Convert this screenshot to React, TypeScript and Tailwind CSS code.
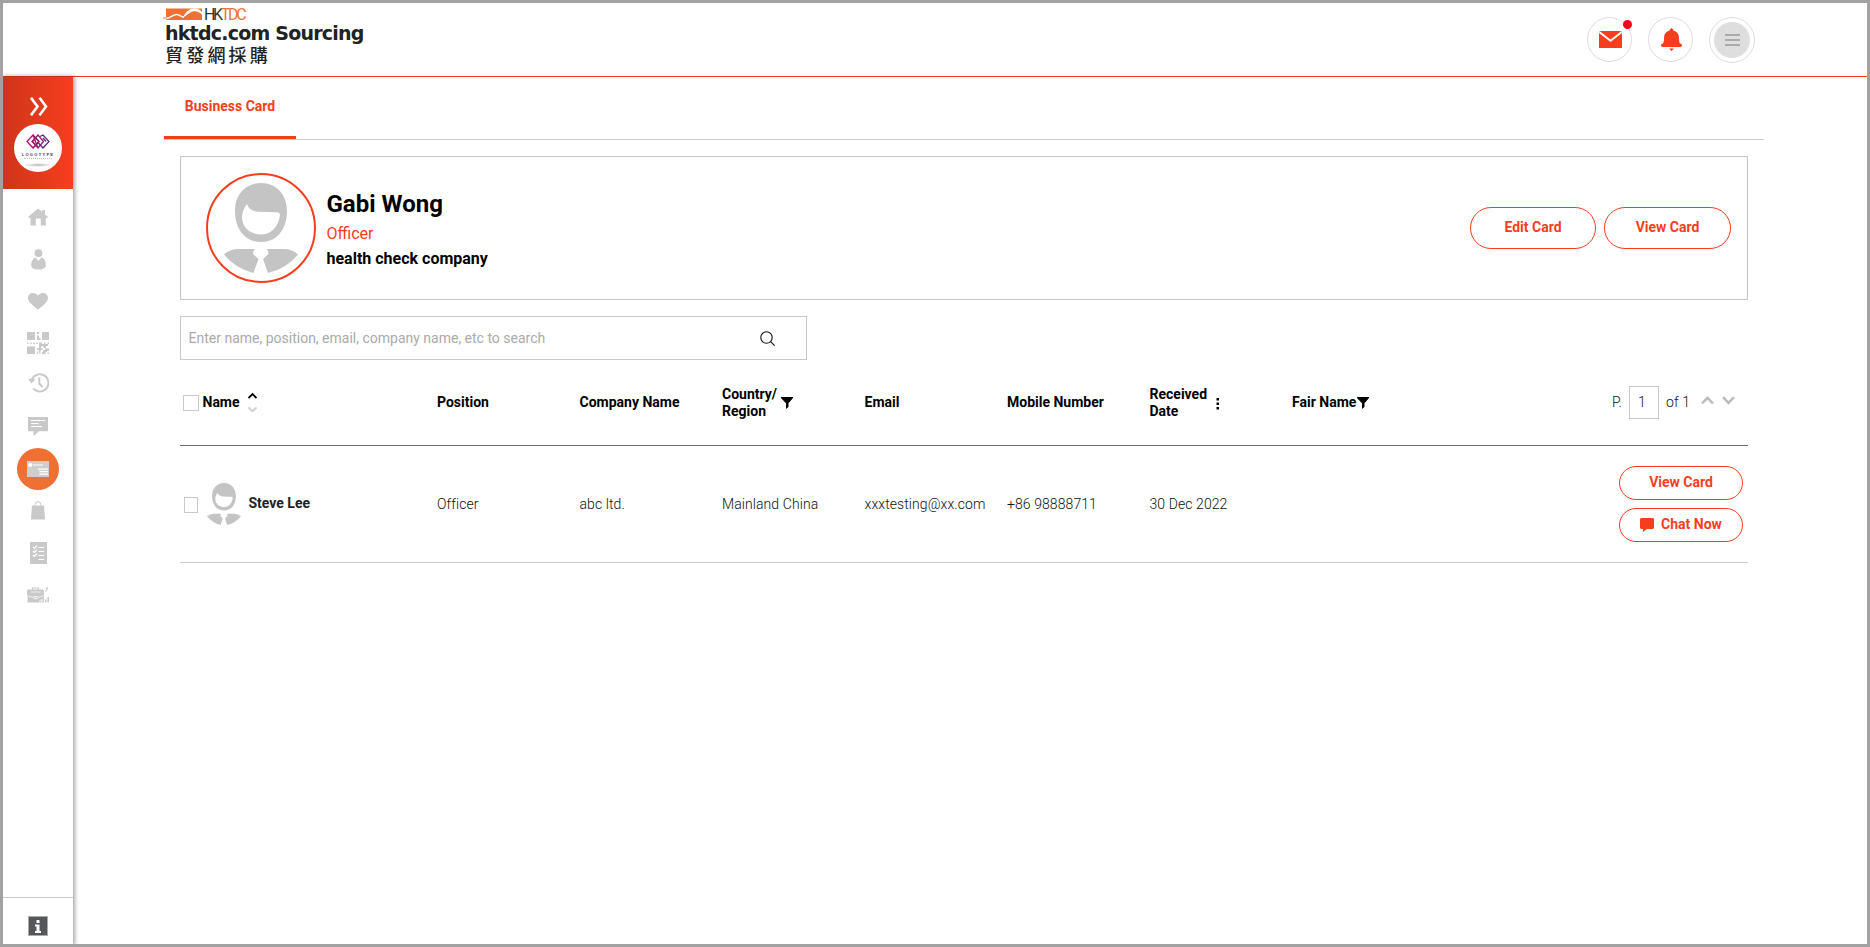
import React from "react";

const sideIcon = "fill-[#c9c9c9]";

function Home() {
  return (
    <svg className={sideIcon} width="20" height="18" viewBox="0 0 20 18">
      <path d="M10 0.5 14.2 4V2h2.8v4.4L20 9l-1 1.2-1.2-.9V17.5h-5V10.5H7.8v7H2.5V9.3L1.2 10.2 0 9z" />
    </svg>
  );
}
function Person() {
  return (
    <svg className={sideIcon} width="15" height="21" viewBox="0 0 15 21">
      <circle cx="7.500" cy="4.200" r="3.900" />
      <path d="M4.200 8.300 7.500 12l3.300-3.700C13.200 9.500 15 13 14.800 16.400 14.800 19 11 20.600 7.500 20.600S.3 19 .3 16.400C.1 13 1.800 9.500 4.200 8.300z" />
    </svg>
  );
}
function Heart() {
  return (
    <svg className={sideIcon} width="20" height="17" viewBox="0 0 20 17">
      <path d="M10 16.800C6.500 13.500 0 9.500 0 5 0 2 2.300 0 5 0c2.200 0 4.200 1.200 5 2.800C10.800 1.200 12.800 0 15 0c2.700 0 5 2 5 5 0 4.500-6.500 8.500-10 11.800z" />
    </svg>
  );
}
function Qr() {
  return (
    <svg className={sideIcon} width="22" height="22" viewBox="0 0 22 22">
      <path d="M0 0h8v8H0zM15 0h7v8h-7zM0 14.500h8V22H0zM10 0h2.200v2H10zM10 3.500h2V6h1.500v2H10zM0 10.500h1.500V12H0zM3.200 10.500h1.500V12H3.200zM6.200 10.500h1.600V12H6.200zM9.200 10.500h1.600V12H9.200zM12 10.500h3V12h2v-1.500h1.500V12H21v2h-2v2h-2.500v-1.800H14v2h1.500V18h-2v3.500H12V18h-1.800v-2H12zM20.500 10.500H22V12h-1.500zM16 18h2v-1.500h4V19h-2v1h-1.500v2H15v-2h1zM10 19.500h1.200V22H10zM20.500 20.500H22V22h-1.500z" />
    </svg>
  );
}
function History() {
  return (
    <svg width="21" height="20" viewBox="0 0 21 20" fill="none" stroke="#c9c9c9" strokeWidth="2">
      <path d="M3.300 9.200a8.600 8.600 0 1 1 2 6.200" />
      <path d="M11.300 4.500v6l3.200 3.500" />
      <path d="M0 5.800 3.600 10.500 7.300 6.300z" fill="#c9c9c9" stroke="none" />
    </svg>
  );
}
function Message() {
  return (
    <svg width="20" height="19" viewBox="0 0 20 19">
      <path fill="#c9c9c9" d="M0 0h20v14.200h-9L5.500 19v-4.800H0z" />
      <path stroke="#fff" strokeWidth="1.200" d="M3 3.500h14M3 6.500h7.500M3 9.500h11" />
    </svg>
  );
}
function CardIcon() {
  return (
    <svg width="22" height="16" viewBox="0 0 22 16">
      <path fill="#cecece" d="M0 0h22v16H0z" />
      <circle cx="3.200" cy="4" r="2.100" fill="#fff" />
      <path stroke="#fff" strokeWidth="1.200" d="M6 4h10M11 8.200h10M12.300 10.600H21M12.300 13.100H21" />
    </svg>
  );
}
function Bag() {
  return (
    <svg width="14" height="19" viewBox="0 0 14 19">
      <path fill="#c9c9c9" d="M1 4.500h12l1 14H0z" />
      <path fill="none" stroke="#c9c9c9" strokeWidth="1" d="M4.200 5V3.500a2.800 2.800 0 0 1 5.600 0V5" />
    </svg>
  );
}
function Checklist() {
  return (
    <svg width="17" height="22" viewBox="0 0 17 22">
      <path fill="#c9c9c9" d="M0 0h17v22H0z" />
      <path fill="none" stroke="#fff" strokeWidth="1.200" d="m3 5 1.300 1.300L7 3.800M3 9l1.300 1.300L7 7.800M3 13l1.300 1.300L7 11.800M8.500 5.500H14M8.500 9.500H14M8.500 13.500H14M8.500 17.500H14" />
    </svg>
  );
}
function Briefcase() {
  return (
    <svg width="22" height="16" viewBox="0 0 22 16">
      <path fill="none" stroke="#c9c9c9" strokeWidth="1.200" d="M5.500 3V1h6v2M18.500 4.500 20.800 1M18.800 1H21" />
      <path fill="#c9c9c9" d="M1.500 2.600h14q1.500 0 1.500 1.600V11l-4.500 2.500V15.400H.6V9.500L0 8.200V4.200q0-1.600 1.500-1.600zM13.200 13.500h1.400v2h-1.400zM15.500 11.500H17v4h-1.500zM18 12.500h1.500v3H18zM20.500 10H22v5.500h-1.500z" />
      <path fill="none" stroke="#fff" strokeWidth=".7" d="M.5 8.800 7 10.600M10 10.600 16.800 8.800M3.500 5h10M7 9.500h3v2.300H7z" />
    </svg>
  );
}

function Avatar({ className }: { className: string }) {
  return (
    <svg className={className} viewBox="0 0 74 90" preserveAspectRatio="none">
      <path
        fill="#c4c4c4"
        fillRule="evenodd"
        d="M37 0C53 0 63 12 63 28 63 46 53 59 37 59S11 46 11 28C11 12 21 0 37 0zM22.800 21C20 25 18 30 18 34 18 45 27 51.500 37 51.500S54.500 44 56 32C56 30.500 55 29.500 53 29.300L34 28.800C28.500 28.300 24.500 25.500 22.800 21z"
      />
      <path
        fill="#c4c4c4"
        d="M0 71.500Q6 66 14 66H31Q28 69 29.500 71.500L34.500 76 29.500 90Q12 86 0 71.500zM74 71.500Q68 66 60 66H42.500Q45.500 69 44 71.500L39 76 44 90Q62 86 74 71.500z"
      />
    </svg>
  );
}

function Funnel({ className }: { className?: string }) {
  return (
    <svg className={className} width="12" height="12" viewBox="0 0 12 12">
      <path d="M0 0h12v1L7.500 6.200V10L5 12V6.200L0 1z" />
    </svg>
  );
}

const slots = [
  { h: "h-[42px]", icon: <Home /> },
  { h: "h-[42px]", icon: <Person /> },
  { h: "h-[42px]", icon: <Heart /> },
  { h: "h-[42px]", icon: <Qr /> },
  { h: "h-[38px]", icon: <History /> },
  { h: "h-[48px]", icon: <Message /> },
];

const pill =
  "flex items-center justify-center rounded-full border border-[#f63e1f] text-sm font-bold text-[#f63e1f]";

const columns = "grid grid-cols-[257px_repeat(6,142.500px)_1fr_auto] items-center";

export default function App() {
  return (
    <div className="flex h-[947px] w-[1870px] flex-col overflow-hidden border-[3px] border-[#a2a2a2] bg-white font-['Roboto','Liberation_Sans',sans-serif] text-sm text-[#262626]">
      <header className="flex h-[74px] shrink-0 justify-between border-b border-[#f63e1f] pr-[112px] pl-[160px]">
        <div className="flex flex-col pt-[5px]">
          <div className="flex h-3">
            <svg width="42" height="12" viewBox="0 0 42 12">
              <path fill="#ee7033" d="M3 .5h36V12H3z" />
              <path fill="#fff" d="M20 9.500C23 3 27 .3 31.500.3S39 3 41.500 9C38 5 35 2.800 31 3.200 27 3.600 25 7 20 9.500z" />
              <path fill="none" stroke="#fff" strokeWidth="1.500" d="M3 10.400C8 9.800 10 6.400 13.500 6.400S18 9.400 21 9" />
              <path stroke="#ee7033" d="M0 10h3.500" />
            </svg>
            <span className="-ml-px text-[16px] leading-[13px] tracking-[-2.300px] text-[#333]">
              HK<span className="text-[#ee7033]">TDC</span>
            </span>
          </div>
          <div className="mt-[3px] ml-0.5 font-['DejaVu_Sans',sans-serif] text-[19px] leading-5 font-bold tracking-[-0.780px] whitespace-nowrap text-[#222]">
            hktdc.com Sourcing
          </div>
          <div className="ml-0.5 font-['Noto_Sans_CJK_TC',sans-serif] text-[18px] leading-[22px] font-medium tracking-[3.200px] text-[#222]">
            貿發網採購
          </div>
        </div>
        <div className="flex gap-4 pt-[14px]">
          <div className="relative flex size-[45px] items-center justify-center rounded-full border border-[#dcdcdc]">
            <svg className="ml-px" width="23" height="17" viewBox="0 0 23 17">
              <path fill="#f63e1f" d="M0 0h23v17H0z" />
              <path fill="none" stroke="#fff" strokeWidth="1.800" d="m0 .8 11.500 9L23 .8" />
            </svg>
            <span className="absolute top-0.5 -right-px size-[9px] rounded-full bg-[#fa0019]" />
          </div>
          <div className="flex size-[45px] items-center justify-center rounded-full border border-[#dcdcdc]">
            <svg className="ml-0.5" width="21" height="23" viewBox="0 0 21 23">
              <path fill="#f63e1f" d="M8.700 2.400V1.500L10.500 0l1.800 1.500v.9c3.700.8 5.500 3.400 5.700 7 .1 3 0 4 1 6 1 .2 2 .6 2 1.900 0 1.200-.7 1.700-1.500 1.700h-18C.7 19 0 18.500 0 17.300c0-1.300 1-1.700 2-1.900 1-2 .9-3 1-6 .2-3.600 2-6.200 5.700-7zM8 20.500h5L10.500 23z" />
            </svg>
          </div>
          <div className="flex size-[46px] items-center justify-center rounded-full border border-[#dcdcdc]">
            <div className="flex size-9 flex-col items-center justify-center gap-[3px] rounded-full bg-[#dedede]">
              <div className="h-0.5 w-[15px] bg-[#aaa]" />
              <div className="h-0.5 w-[15px] bg-[#aaa]" />
              <div className="h-0.5 w-[15px] bg-[#aaa]" />
            </div>
          </div>
        </div>
      </header>

      <div className="flex min-h-0 flex-1">
        <aside className="flex w-[70px] shrink-0 flex-col bg-white shadow-[1px_0_4px_1px_rgba(0,0,0,0.35)]">
          <div className="flex h-28 flex-col items-center bg-linear-to-r from-[#cf3519] to-[#f63e1f] pt-5">
            <svg className="ml-px" width="18" height="19" viewBox="0 0 18 19" fill="none" stroke="#fff" strokeWidth="2.600">
              <path d="m1 .8 6.500 8.700L1 18.200M9.500.8 16 9.500l-6.500 8.700" />
            </svg>
            <div className="mt-2 flex size-12 flex-col items-center overflow-hidden rounded-full bg-white">
              <svg className="mt-2.5" width="24" height="15" viewBox="0 0 24 15" fill="none" strokeWidth="1.300">
                <path stroke="#c9085c" d="M12 14 7 1 1 7.500 7 14l6-6.500L9.500 4 6 7.500 9 10.500" />
                <path stroke="#5a2a87" d="M14 2.500 17 1l6 6.500L17 14l-5-5.500M20 7.500 17 4" />
                <path stroke="#941c70" d="M7 1 13 7.500 7 14M12 1 6.500 7.500 12 14l5.500-6.500z" />
              </svg>
              <div className="mt-[3px] font-['Liberation_Sans',sans-serif] text-[4px] leading-[5px] font-bold tracking-[1.300px] text-[#5b2a70]">
                LOGOTYPE
              </div>
              <div className="mt-px w-7 border-t border-dotted border-[#bbb]" />
              <div className="mt-1 h-1 w-[30px] rounded-[50%] bg-[radial-gradient(closest-side,#bbb,transparent)]" />
            </div>
          </div>
          <nav className="flex flex-1 flex-col items-center pt-[7px]">
            {slots.map((s, i) => (
              <div key={i} className={`flex items-center justify-center ${s.h}`}>
                {s.icon}
              </div>
            ))}
            <div className="-mt-0.5 flex size-[42px] items-center justify-center rounded-full bg-[#ee7033]">
              <CardIcon />
            </div>
            <div className="flex h-[42px] items-center pb-0.5">
              <Bag />
            </div>
            <div className="flex h-[42px] items-center">
              <Checklist />
            </div>
            <div className="flex h-[42px] items-center">
              <Briefcase />
            </div>
          </nav>
          <div className="flex h-[47px] justify-center border-t border-[#c9c9c9] pt-[18px]">
            <div className="flex size-5 items-center justify-center border border-[#aaa] bg-[#55575a]">
              <svg width="6" height="13" viewBox="0 0 6 13" fill="#fff">
                <path d="M1.500 0h3v3h-3zM0 4.500h4.500V11H6v2H0v-2h1.500V6.500H0z" />
              </svg>
            </div>
          </div>
        </aside>

        <main className="ml-[91px] w-[1600px]">
          <div className="flex h-[63px] border-b border-[#ccc]">
            <div className="flex h-[62px] w-[132px] justify-center border-b-[3px] border-[#f63e1f] pt-[19px] leading-5 font-bold text-[#f63e1f]">
              Business Card
            </div>
          </div>

          <div className="px-4 pt-4">
            <section className="flex h-36 items-center justify-between border border-[#c6c6c6] pr-4 pl-[25px]">
              <div className="flex items-center">
                <div className="flex size-[110px] justify-center rounded-full border-2 border-[#f63e1f] pt-2">
                  <Avatar className="h-[90px] w-[74px]" />
                </div>
                <div className="ml-[10.500px] pt-[5px] text-black">
                  <h1 className="text-2xl leading-7 font-bold">Gabi Wong</h1>
                  <p className="mt-1 text-base leading-6 text-[#f63e1f]">Officer</p>
                  <p className="text-base leading-[26px] font-bold">health check company</p>
                </div>
              </div>
              <div className="flex gap-2">
                <button className={`${pill} h-[42px] w-[126px] pb-0.5`}>Edit Card</button>
                <button className={`${pill} h-[42px] w-[127px] pb-0.5`}>View Card</button>
              </div>
            </section>

            <div className="mt-4 flex h-11 w-[627px] items-center justify-between border border-[#c9c9c9] pr-[31px] pl-[7.500px] text-[#aaa]">
              Enter name, position, email, company name, etc to search
              <svg width="15" height="15" viewBox="0 0 15 15" fill="none" stroke="#111" strokeWidth="1.100">
                <circle cx="6.500" cy="6.500" r="5.700" />
                <path d="m10.600 10.600 4 4" />
              </svg>
            </div>

            <div className={`${columns} h-[86px] border-b border-[#6b6b6b] leading-[17px] font-bold text-black`}>
              <div className="flex items-center pl-[3px]">
                <span className="size-4 border border-[#c9c9c9]" />
                <span className="ml-[3.500px]">Name</span>
                <svg className="ml-2" width="9" height="19" viewBox="0 0 9 19" fill="none" strokeWidth="1.800">
                  <path stroke="#000" d="m.5 5 4-4 4 4" />
                  <path stroke="#ccc" d="m.5 14.500 4 3.800 4-3.800" />
                </svg>
              </div>
              <div>Position</div>
              <div>Company Name</div>
              <div className="flex items-center">
                <span>
                  Country/
                  <br />
                  Region
                </span>
                <Funnel className="ml-1" />
              </div>
              <div>Email</div>
              <div>Mobile Number</div>
              <div className="flex items-center">
                <span>
                  Received
                  <br />
                  Date
                </span>
                <svg className="mt-0.5 ml-[9px]" width="4" height="12" viewBox="0 0 4 12">
                  <path d="M.5 0h2.500v2.500H.5zM.5 4.500h2.500V7H.5zM.5 9h2.500v2.500H.5z" />
                </svg>
              </div>
              <div className="flex items-center">
                Fair Name
                <Funnel className="ml-[0.500px]" />
              </div>
              <div className="flex items-center pr-[13px] font-light tracking-[0.080px] text-[#111]">
                P.
                <span className="ml-[7px] flex h-[33px] w-[30px] items-center border border-[#c9c9c9] pl-2">1</span>
                <span className="ml-[7px]">of 1</span>
                <svg className="-mt-1 ml-[11px]" width="34" height="9" viewBox="0 0 34 9" fill="none" stroke="#bbb" strokeWidth="2.400">
                  <path d="m1 7.500 5.500-5.700L12 7.500M22 1.200l5.500 5.700L33 1.200" />
                </svg>
              </div>
            </div>

            <div className={`${columns} h-[117px] border-b border-[#ccc] font-light tracking-[0.080px] text-[#111]`}>
              <div className="flex items-center pl-1">
                <span className="mt-0.5 h-4 w-3.5 border border-[#c9c9c9]" />
                <Avatar className="ml-[9px] h-[42px] w-[34px]" />
                <span className="ml-[7.500px] pb-0.5 font-bold tracking-normal text-[#222]">Steve Lee</span>
              </div>
              <div>Officer</div>
              <div>abc ltd.</div>
              <div>Mainland China</div>
              <div>xxxtesting@xx.com</div>
              <div>+86 98888711</div>
              <div>30 Dec 2022</div>
              <div />
              <div className="flex flex-col gap-2 pr-[5px] tracking-normal">
                <button className={`${pill} h-[34px] w-[124px] pb-0.5`}>View Card</button>
                <button className={`${pill} h-[34px] w-[124px] pb-0.5`}>
                  <svg className="mt-0.5 mr-[7px]" width="14" height="14" viewBox="0 0 14 14" fill="#f63e1f">
                    <path d="M1.500 0h11Q14 0 14 1.500v8q0 1.500-1.500 1.500H7l-4 3v-3H1.500Q0 11 0 9.500v-8Q0 0 1.500 0z" />
                  </svg>
                  Chat Now
                </button>
              </div>
            </div>
          </div>
        </main>
      </div>
    </div>
  );
}
